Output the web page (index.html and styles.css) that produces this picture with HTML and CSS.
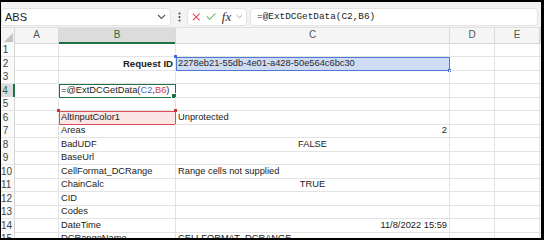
FILE: index.html
```html
<!DOCTYPE html>
<html lang="en">
<head>
    <meta charset="UTF-8">
    <title>Planilha</title>
    <link rel="stylesheet" href="styles.css">
</head>
<body>
    <div class="janela">
        <div class="barra-formula">
            <div class="caixa-nome">
                <span>ABS</span>
                <svg class="seta" width="9" height="6" viewBox="0 0 9 6"><path d="M1 1 L4.5 4.5 L8 1" fill="none" stroke="#555" stroke-width="1.1"/></svg>
            </div>
            <div class="pontos">
                <svg width="3" height="10" viewBox="0 0 3 10"><circle cx="1.5" cy="1.5" r="1" fill="#444"/><circle cx="1.5" cy="5" r="1" fill="#444"/><circle cx="1.5" cy="8.5" r="1" fill="#444"/></svg>
            </div>
            <div class="caixa-fx">
                <svg width="10" height="10" viewBox="0 0 10 10"><path d="M1 1 L9 9 M9 1 L1 9" stroke="#e0474c" stroke-width="1.2"/></svg>
                <svg width="12" height="9" viewBox="0 0 12 9"><path d="M1 4.5 L4.2 7.8 L11 1" fill="none" stroke="#4fae55" stroke-width="1.2"/></svg>
                <span class="fx">fx</span>
                <svg class="seta" width="8" height="5" viewBox="0 0 8 5"><path d="M1 1 L4 4 L7 1" fill="none" stroke="#999" stroke-width="1"/></svg>
            </div>
            <div class="formula">=@ExtDCGetData(C2,B6)</div>
        </div>

        <div class="planilha">
            <div class="linha cabecalho">
                <div class="canto"><svg width="9" height="9" viewBox="0 0 9 9"><polygon points="9,0 9,9 0,9" fill="#c4c4c4"/></svg></div>
                <div class="col">A</div>
                <div class="col ativa">B</div>
                <div class="col">C</div>
                <div class="col">D</div>
                <div class="col">E</div>
                <div class="col"></div>
            </div>
            <div class="linha"><div class="num">1</div><div class="cel"></div><div class="cel"></div><div class="cel"></div><div class="cel"></div><div class="cel"></div><div class="cel"></div></div>
            <div class="linha"><div class="num">2</div><div class="cel"></div><div class="cel direita negrito">Request ID</div><div class="cel selecao">2278eb21-55db-4e01-a428-50e564c6bc30</div><div class="cel"></div><div class="cel"></div><div class="cel"></div></div>
            <div class="linha"><div class="num">3</div><div class="cel"></div><div class="cel"></div><div class="cel"></div><div class="cel"></div><div class="cel"></div><div class="cel"></div></div>
            <div class="linha"><div class="num marcado">4</div><div class="cel"></div><div class="cel ativa">=@ExtDCGetData(<span class="ref-azul">C2</span>,<span class="ref-vermelha">B6</span>)</div><div class="cel"></div><div class="cel"></div><div class="cel"></div><div class="cel"></div></div>
            <div class="linha"><div class="num">5</div><div class="cel"></div><div class="cel"></div><div class="cel"></div><div class="cel"></div><div class="cel"></div><div class="cel"></div></div>
            <div class="linha"><div class="num">6</div><div class="cel"></div><div class="cel referencia">AltInputColor1</div><div class="cel">Unprotected</div><div class="cel"></div><div class="cel"></div><div class="cel"></div></div>
            <div class="linha"><div class="num">7</div><div class="cel"></div><div class="cel">Areas</div><div class="cel direita">2</div><div class="cel"></div><div class="cel"></div><div class="cel"></div></div>
            <div class="linha"><div class="num">8</div><div class="cel"></div><div class="cel">BadUDF</div><div class="cel centro">FALSE</div><div class="cel"></div><div class="cel"></div><div class="cel"></div></div>
            <div class="linha"><div class="num">9</div><div class="cel"></div><div class="cel">BaseUrl</div><div class="cel"></div><div class="cel"></div><div class="cel"></div><div class="cel"></div></div>
            <div class="linha"><div class="num">10</div><div class="cel"></div><div class="cel">CellFormat_DCRange</div><div class="cel">Range cells not supplied</div><div class="cel"></div><div class="cel"></div><div class="cel"></div></div>
            <div class="linha"><div class="num">11</div><div class="cel"></div><div class="cel">ChainCalc</div><div class="cel centro">TRUE</div><div class="cel"></div><div class="cel"></div><div class="cel"></div></div>
            <div class="linha"><div class="num">12</div><div class="cel"></div><div class="cel">CID</div><div class="cel"></div><div class="cel"></div><div class="cel"></div><div class="cel"></div></div>
            <div class="linha"><div class="num">13</div><div class="cel"></div><div class="cel">Codes</div><div class="cel"></div><div class="cel"></div><div class="cel"></div><div class="cel"></div></div>
            <div class="linha"><div class="num">14</div><div class="cel"></div><div class="cel">DateTime</div><div class="cel direita">11/8/2022 15:59</div><div class="cel"></div><div class="cel"></div><div class="cel"></div></div>
            <div class="linha"><div class="num">15</div><div class="cel"></div><div class="cel">DCRangeName</div><div class="cel">CELLFORMAT_DCRANGE</div><div class="cel"></div><div class="cel"></div><div class="cel"></div></div>
        </div>
    </div>
</body>
</html>
```

FILE: styles.css
```css
* {
    margin: 0;
    padding: 0;
    box-sizing: border-box;
}

body {
    font-family: "Liberation Sans", Arial, sans-serif;
    font-size: 9.3px;
    color: #222;
}

.janela {
    width: 544px;
    height: 240px;
    border-style: solid;
    border-color: #000;
    border-width: 2px 3px 2px 1px;
    background: #fff;
    overflow: hidden;
}

/* barra de formula */
.barra-formula {
    display: flex;
    align-items: center;
    height: 26px;
    padding: 6px 3px 2px 0;
    background: #f3f3f3;
    border-bottom: 1px solid #e0e0e0;
}

.caixa-nome, .caixa-fx, .formula {
    display: flex;
    align-items: center;
    height: 18px;
    background: #fff;
    border: 1px solid #e3e3e3;
    border-radius: 4px;
}

.caixa-nome {
    width: 170px;
    padding: 0 4px 0 3px;
    justify-content: space-between;
    font-size: 11px;
    color: #222;
}

.pontos {
    width: 16px;
    display: flex;
    justify-content: center;
}

.caixa-fx {
    width: 60px;
    padding: 0 3px 0 4px;
    gap: 5px;
}

.fx {
    font-family: "Liberation Serif", serif;
    font-style: italic;
    font-size: 13px;
    color: #333;
    margin-left: 1px;
}

.formula {
    flex: 1;
    margin-left: 3px;
    padding-left: 6px;
    font-family: "Liberation Mono", monospace;
    font-size: 9.4px;
    color: #222;
}

/* grade */
.linha {
    display: grid;
    grid-template-columns: 14px 44px 117px 274px 45px 45px 1fr;
    height: 13.5px;
}

.cabecalho {
    height: 15px;
    background: #f5f5f5;
}

.canto {
    display: flex;
    align-items: flex-end;
    justify-content: flex-end;
    padding: 0 1px 1px 0;
    border-right: 1px solid #d6d6d6;
    border-bottom: 1px solid #d6d6d6;
}

.col {
    text-align: center;
    line-height: 14px;
    font-size: 10px;
    color: #555;
    border-right: 1px solid #dadada;
    border-bottom: 1px solid #d6d6d6;
}

.col.ativa {
    background: #dcdcdc;
    color: #1e6e42;
    border-bottom: 2px solid #1e7145;
}

.num {
    padding-right: 4px;
    text-align: center;
    line-height: 13px;
    font-size: 10px;
    color: #444;
    background: #fafafa;
    border-right: 1px solid #d6d6d6;
    border-bottom: 1px solid #e6e6e6;
}

.num.marcado {
    background: #dcdcdc;
    color: #1e6e42;
    border-right: 2px solid #1e7145;
}

.cel {
    position: relative;
    padding: 0 2px;
    line-height: 13px;
    white-space: nowrap;
    border-right: 1px solid #e3e3e3;
    border-bottom: 1px solid #e3e3e3;
}

.direita {
    text-align: right;
}

.centro {
    text-align: center;
}

.negrito {
    font-weight: bold;
    font-size: 9.6px;
}

/* celula selecionada C2 */
.selecao {
    background: #cfdcf3;
    outline: 1.5px solid #4a7bd0;
    outline-offset: -1px;
    color: #2a2a2a;
}

.selecao::before, .selecao::after {
    content: "";
    position: absolute;
    width: 3px;
    height: 3px;
    background: #3f6fc6;
}

.selecao::before {
    left: -2px;
    top: -2px;
}

.selecao::after {
    right: -2px;
    bottom: -2px;
}

/* celula ativa B4 */
.cel.ativa {
    outline: 1.5px solid #1e7145;
    outline-offset: -1px;
}

.cel.ativa::after {
    content: "";
    position: absolute;
    right: -2px;
    bottom: -2px;
    width: 4px;
    height: 4px;
    background: #1e7145;
    border: 1px solid #fff;
}

.ref-azul {
    color: #3a6fd0;
}

.ref-vermelha {
    color: #d03a3a;
}

/* referencia B6 */
.referencia {
    background: #fbe6e6;
    outline: 1.5px solid #d94f55;
    outline-offset: -1px;
}

.referencia::before, .referencia::after {
    content: "";
    position: absolute;
    width: 3px;
    height: 3px;
    background: #c9343b;
    top: -2px;
}

.referencia::before {
    left: -2px;
}

.referencia::after {
    right: -2px;
}
```
